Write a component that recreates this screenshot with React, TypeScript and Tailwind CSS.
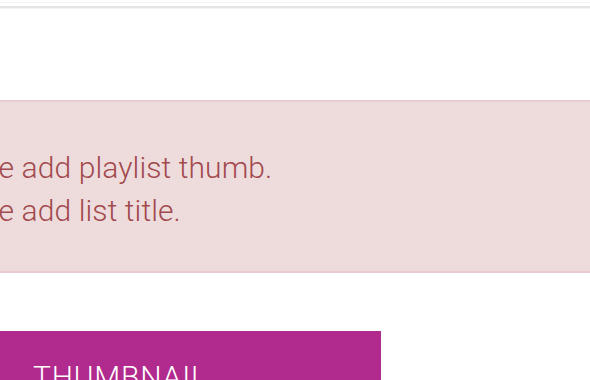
export default function App() {
  return (
    <div className="w-[590px] h-[380px] overflow-hidden bg-white" style={{ fontFamily: 'Roboto, "Liberation Sans", sans-serif' }}>
      <div className="h-[2px]" />
      <div className="h-px bg-[#f6f6f6]" />
      <div className="h-[3px]" />
      <div className="h-[2px] bg-[#e4e4e4]" />
      <div className="h-px bg-[#f3f3f3]" />
      <div className="h-[91px]" />
      <div className="border-y-2 border-[#e8cbd0] bg-[#eedcdd] pt-[44px] pb-[39px]">
        <div className="ml-[-74px] text-[30px] leading-[43px] font-light text-[#a24a4d] tracking-[0.1px] whitespace-nowrap">
          <div>Please add playlist thumb.</div>
          <div>Please add list title.</div>
        </div>
      </div>
      <div className="h-[58px]" />
      <div className="w-[381px] h-[80px] bg-[#b12a8d] pt-[26px] pl-[33px]">
        <span className="text-[30px] leading-[40px] font-light text-white tracking-[0.8px] uppercase whitespace-nowrap">Thumbnail</span>
      </div>
    </div>
  );
}
